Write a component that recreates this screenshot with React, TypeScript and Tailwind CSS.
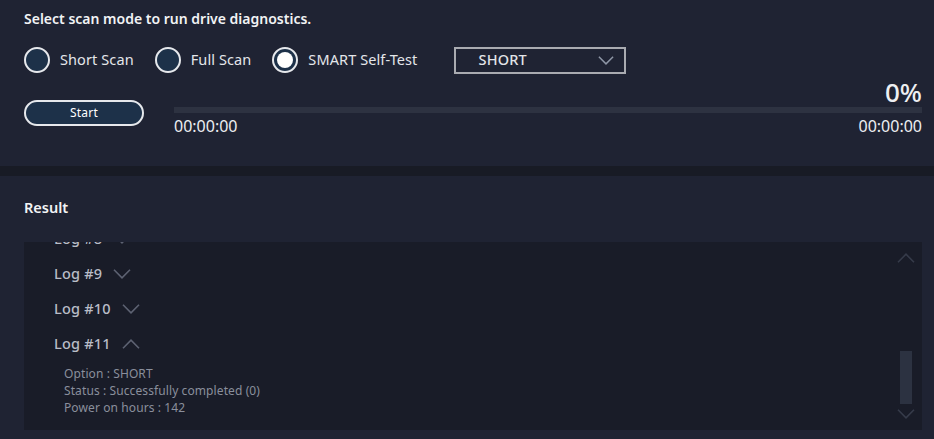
import type { ReactNode } from "react";

const font = { fontFamily: '"Noto Sans", "Open Sans", Arial, sans-serif' };

function Chevron({ up = false, className = "" }: { up?: boolean; className?: string }) {
  return (
    <svg viewBox="0 0 18 10" className={className} fill="none" stroke="currentColor" strokeWidth="1.6">
      {up ? <path d="M1 9.2 9 1.2l8 8" /> : <path d="M1 0.8l8 8 8-8" />}
    </svg>
  );
}

function Radio({ checked, children, className = "" }: { checked?: boolean; children: ReactNode; className?: string }) {
  return (
    <label className={`flex items-center gap-[10px] ${className}`}>
      <span className="flex h-[26px] w-[26px] items-center justify-center rounded-full border-2 border-[#e6e8ec] bg-[#1d3149]">
        {checked ? <span className="h-[16px] w-[16px] rounded-full bg-white" /> : null}
      </span>
      <span className="text-[14.5px] tracking-[0.1px] text-[#e4e6ea]">{children}</span>
    </label>
  );
}

const logs = ["Log #8", "Log #9", "Log #10"];

export default function App() {
  return (
    <div style={font} className="flex h-[439px] w-[934px] flex-col overflow-hidden bg-[#1f2333] text-white">
      <section className="h-[166px] pl-6 pr-3 pt-[9px]">
        <h1 className="text-[14px] font-semibold leading-[20px] text-[#f2f3f5]">Select scan mode to run drive diagnostics.</h1>

        <div className="mt-[17px] flex h-[28px] items-center">
          <Radio>Short Scan</Radio>
          <Radio className="ml-[21px]">Full Scan</Radio>
          <Radio checked className="ml-[21px]">SMART Self-Test</Radio>
          <div className="ml-[37px] flex h-[27px] w-[172px] items-center justify-between border-2 border-[#a9abb1] pl-[22px] pr-[10px]">
            <span className="text-[14.5px] font-medium tracking-[0.2px] text-[#e2e4e8]">SHORT</span>
            <Chevron className="h-[9px] w-[16px] text-[#8e96a6]" />
          </div>
        </div>

        <div className="mt-[4px] flex items-start">
          <button type="button" className="mt-[22px] h-[26px] w-[120px] rounded-full border-2 border-[#e6e8ec] bg-[#1d3149] text-[12px] tracking-[0.2px] text-white">
            Start
          </button>
          <div className="ml-[30px] flex flex-1 flex-col">
            <div className="text-right text-[26px] font-medium leading-[29px] text-[#eeeff2]">0%</div>
            <div className="h-[6px] w-full bg-[#2d3241]" />
            <div className="mt-[3px] flex justify-between text-[16px] leading-[20px] text-[#eceef1]">
              <span>00:00:00</span>
              <span>00:00:00</span>
            </div>
          </div>
        </div>
      </section>

      <div className="h-[10px] bg-[#181b25]" />

      <section className="flex flex-1 flex-col pl-6 pr-3 pt-[21px]">
        <h2 className="text-[14.5px] font-semibold leading-[20px] text-[#f2f3f5]">Result</h2>
        <div className="mt-[25px] flex h-[188px] overflow-hidden bg-[#191c28]">
          <div className="flex-1 overflow-hidden">
            <div className="-mt-[21px] pl-[30px]">
              {logs.map((log) => (
                <div key={log} className="flex h-[35px] items-center gap-[11px]">
                  <span className="text-[14.5px] font-medium tracking-[0.2px] text-[#b9bdc7]">{log}</span>
                  <Chevron className="h-[10px] w-[18px] text-[#5d6272]" />
                </div>
              ))}
              <div className="flex h-[35px] items-center gap-[11px]">
                <span className="text-[14.5px] font-medium tracking-[0.2px] text-[#b9bdc7]">Log #11</span>
                <Chevron up className="h-[10px] w-[18px] text-[#5d6272]" />
              </div>
              <div className="mt-[4px] pl-[10px] text-[12px] leading-[17px] tracking-[0.1px] text-[#8a8f9c]">
                <p>Option : SHORT</p>
                <p>Status : Successfully completed (0)</p>
                <p>Power on hours : 142</p>
              </div>
            </div>
          </div>
          <div className="mr-[3px] flex w-[26px] flex-col items-center py-[11px]">
            <Chevron up className="h-[10px] w-[18px] text-[#363b4a]" />
            <div className="flex-1" />
            <div className="h-[53px] w-[12px] bg-[#2c3241]" />
            <Chevron className="mt-[5px] h-[10px] w-[18px] text-[#363b4a]" />
          </div>
        </div>
      </section>
    </div>
  );
}
